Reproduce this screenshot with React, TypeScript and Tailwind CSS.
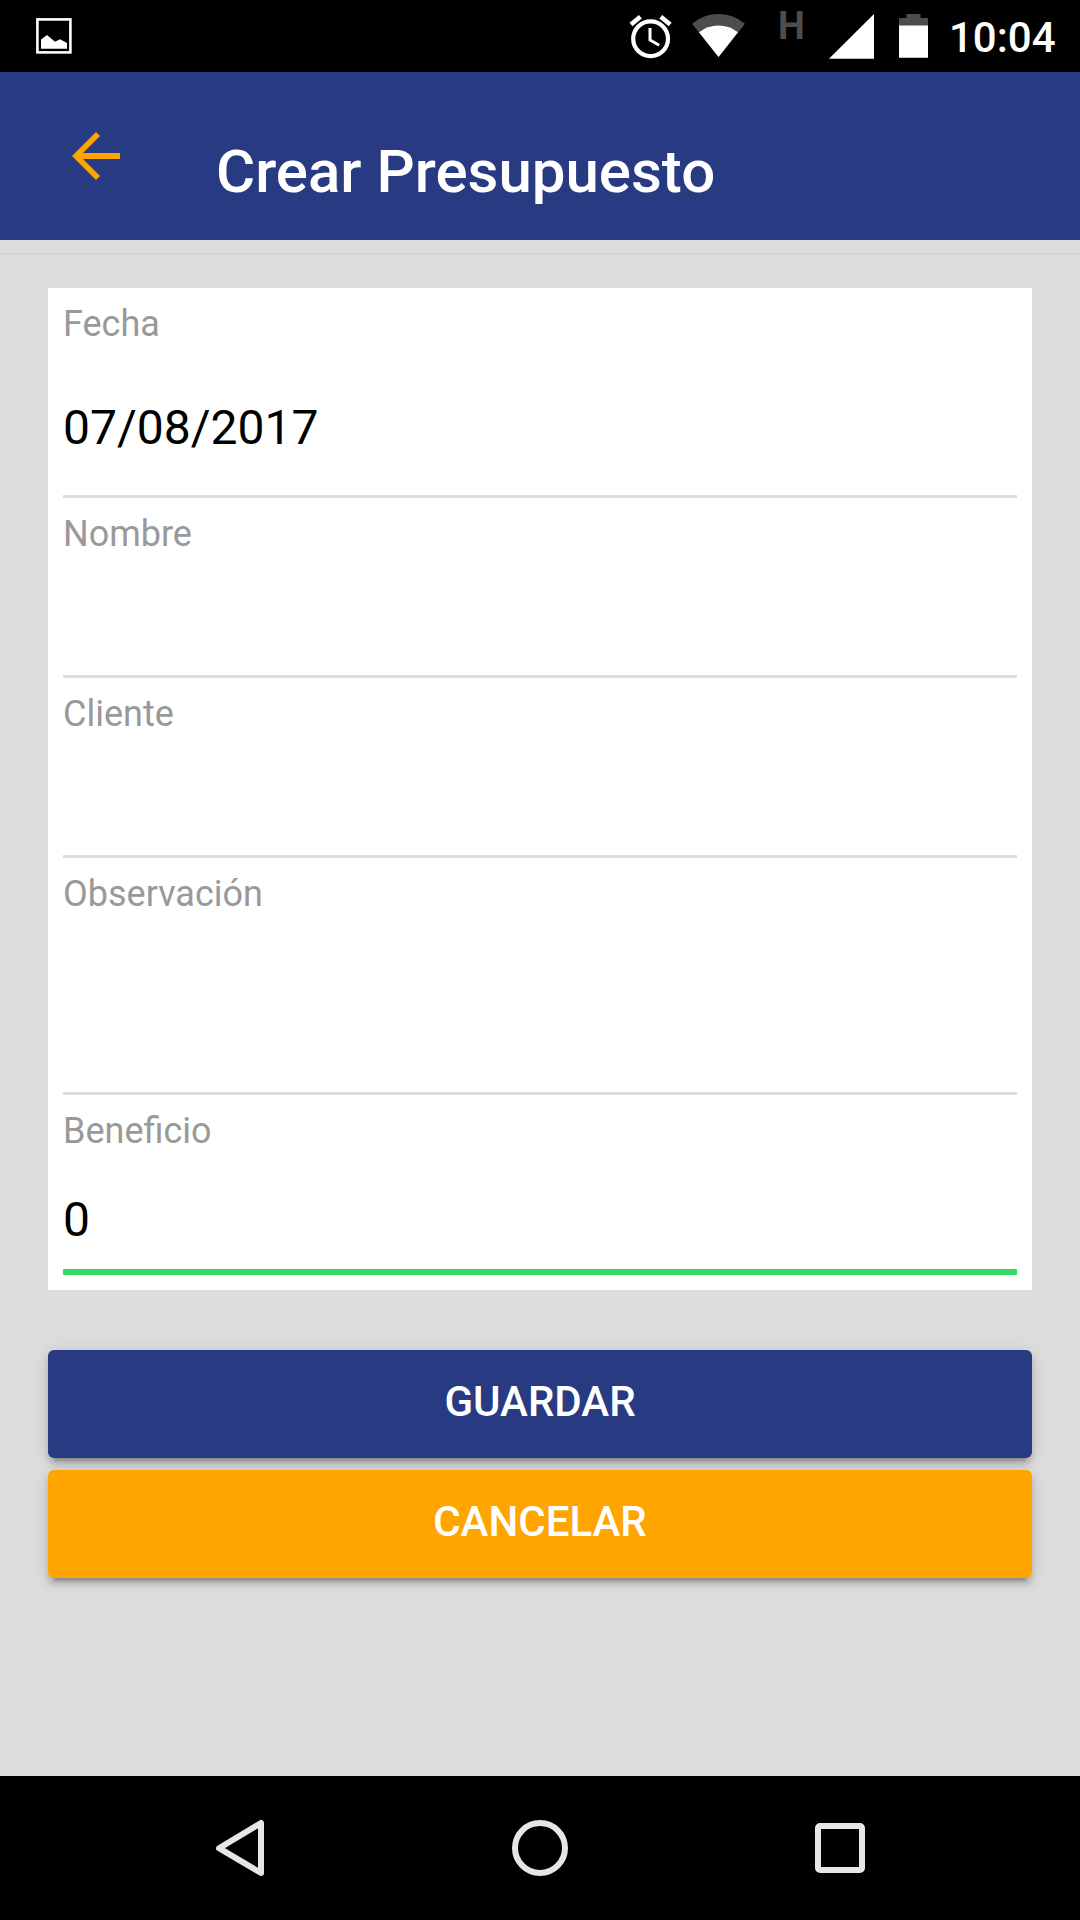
type FieldProps = {
  label: string;
  value?: string;
  size: string;
  valueGap?: string;
};

function Field({ label, value, size, valueGap = "" }: FieldProps) {
  return (
    <div className={`${size} pt-[15px]`}>
      <div className="h-[42px] text-[36px] leading-[42px] text-[#999999]">{label}</div>
      {value && <div className={`${valueGap} text-[48px] leading-[56px] text-black`}>{value}</div>}
    </div>
  );
}

function StatusBar() {
  return (
    <div className="flex h-[72px] items-start bg-black text-white">
      <svg className="mt-[18px] ml-[36px] h-[36px] w-[36px]" viewBox="0 0 36 36">
        <rect x="1.4" y="1.4" width="33" height="33" fill="none" stroke="#fff" strokeWidth="2.6" />
        <path d="M5 30.7V21.5L11 17L19 23.8L24 21.2L31 25V30.7Z" fill="#fff" />
      </svg>
      <div className="grow" />
      <svg className="mt-[14px] h-[45px] w-[44px]" viewBox="0 0 44 45" fill="none" stroke="#fff">
        <circle cx="21.6" cy="24.8" r="17.4" strokeWidth="4.2" />
        <path d="M2 10.6L11.4 2.7M31.8 2.7L41.2 10.6" strokeWidth="4.6" />
        <path d="M21 14V26L30.2 31.3" strokeWidth="3" />
      </svg>
      <svg className="mt-[14px] ml-[19px] h-[44px] w-[54px]" viewBox="0 0 54 44">
        <path d="M0 9.7Q11.5 0 26.5 0T53 9.7L26.5 43Z" fill="#4d4d4d" />
        <path d="M7 18.3Q15.5 11.5 26.5 11.5T46 18.3L26.5 43Z" fill="#fff" />
      </svg>
      <div className="mt-[4px] ml-[32px] w-[28px] text-[38px] leading-[45px] font-bold text-[#4d4d4d]">H</div>
      <svg className="mt-[14px] ml-[23px] h-[45px] w-[45px]" viewBox="0 0 45 45">
        <path d="M45 0V44.7H0Z" fill="#fff" />
      </svg>
      <svg className="mt-[14px] ml-[25px] h-[44px] w-[29px]" viewBox="0 0 29 44">
        <path d="M7.5 0H21.5V4H29V12H0V4H7.5Z" fill="#4d4d4d" />
        <path d="M0 11.5H29V43.8H0Z" fill="#fff" />
      </svg>
      <div className="ml-[21px] w-[131px] pt-[13px] text-[42px] leading-[49px] font-medium">10:04</div>
    </div>
  );
}

function NavBar() {
  return (
    <div className="flex h-[144px] items-center justify-center gap-[240px] bg-black">
      <svg className="h-[60px] w-[60px]" viewBox="0 0 60 60" fill="none" stroke="#e6e6e6" strokeWidth="6">
        <path d="M51 5V55L9 30.2Z" strokeLinejoin="round" />
      </svg>
      <svg className="h-[60px] w-[60px]" viewBox="0 0 60 60" fill="none" stroke="#e6e6e6" strokeWidth="6">
        <circle cx="30" cy="30" r="25" />
      </svg>
      <svg className="h-[60px] w-[60px]" viewBox="0 0 60 60" fill="none" stroke="#e6e6e6" strokeWidth="6">
        <rect x="8" y="8" width="44" height="44" rx="2" />
      </svg>
    </div>
  );
}

const buttonStyle =
  "flex h-[108px] w-full items-center justify-center rounded-[6px] pb-[5px] text-[42px] leading-[48px] font-medium text-white uppercase shadow-[0_6px_6px_0_rgba(0,0,0,0.14),0_9px_3px_-6px_rgba(0,0,0,0.2),0_3px_15px_0_rgba(0,0,0,0.12)]";

export default function App() {
  return (
    <div className="flex h-[1920px] w-[1080px] flex-col overflow-hidden bg-[#dcdcdc] font-['Roboto',sans-serif]">
      <StatusBar />
      <header className="flex h-[168px] items-start bg-[#283a81]">
        <svg className="mt-[60px] ml-[72px] h-[48px] w-[48px]" viewBox="0 0 48 48" fill="none" stroke="#ffa500">
          <path d="M26 2L4 24L26 46" strokeWidth="5.66" />
          <path d="M6 24H48" strokeWidth="6" />
        </svg>
        <h1 className="mt-[64px] ml-[96px] text-[60px] leading-[72px] font-medium text-white">Crear Presupuesto</h1>
      </header>
      <main className="flex grow flex-col">
        <div className="mt-[13px] h-[2px] bg-[#d2d2d2]" />
        <form className="mx-[48px] mt-[33px]">
          <div className="h-[1002px] bg-white px-[15px]">
            <Field label="Fecha" value="07/08/2017" size="h-[210px] border-b-[3px] border-[#dedede]" valueGap="mt-[55px]" />
            <Field label="Nombre" size="h-[180px] border-b-[3px] border-[#dedede]" />
            <Field label="Cliente" size="h-[180px] border-b-[3px] border-[#dedede]" />
            <Field label="Observación" size="h-[237px] border-b-[3px] border-[#dedede]" />
            <Field label="Beneficio" value="0" size="h-[180px] border-b-[6px] border-[#32db64]" valueGap="mt-[40px]" />
          </div>
          <div className="mt-[60px] flex flex-col gap-[12px]">
            <button type="button" className={`${buttonStyle} bg-[#283a81]`}>Guardar</button>
            <button type="button" className={`${buttonStyle} bg-[#ffa500]`}>Cancelar</button>
          </div>
        </form>
      </main>
      <NavBar />
    </div>
  );
}
